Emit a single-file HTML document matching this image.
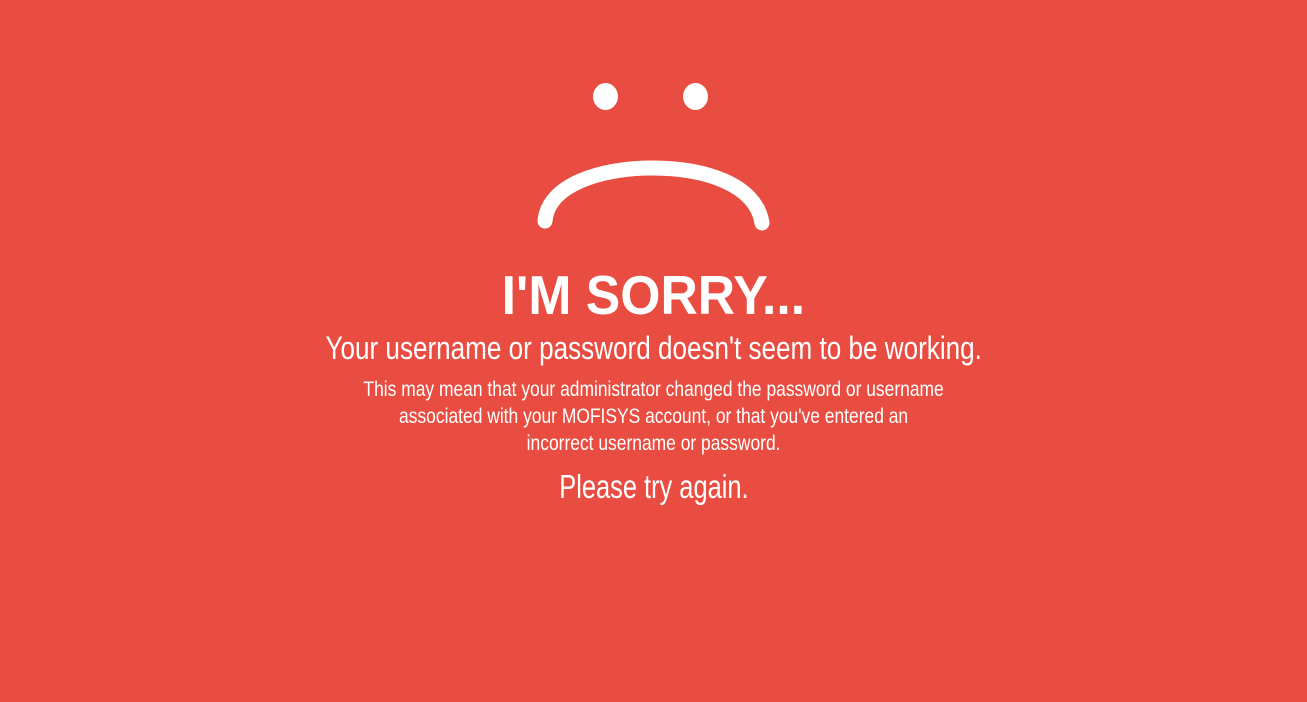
<!DOCTYPE html>
<html><head><style>
html,body{margin:0;padding:0}
body{width:1307px;height:702px;background:#E94C40;position:relative;overflow:hidden;color:#fff;font-family:"Liberation Sans",sans-serif}
.l{position:absolute;left:0;width:1307px;text-align:center;line-height:1;white-space:nowrap}
.l span{display:inline-block}
</style></head><body>
<svg width="1307" height="260" style="position:absolute;left:0;top:0">
<ellipse cx="605.5" cy="96.5" rx="12.5" ry="13.5" fill="#fff"/>
<ellipse cx="695.5" cy="96.5" rx="12.5" ry="13.5" fill="#fff"/>
<path d="M545 221 C548 185 600 168 652 168 C704 168 756 184 762 223" fill="none" stroke="#fff" stroke-width="15" stroke-linecap="round"/>
</svg>
<div class="l" style="top:268px;font-size:55px;font-weight:bold"><span style="transform:scaleX(0.94)">I'M SORRY...</span></div>
<div class="l" style="top:332px;font-size:32px"><span style="transform:scaleX(0.815)">Your username or password doesn't seem to be working.</span></div>
<div class="l" style="top:376px;font-size:21px;line-height:27px"><span style="transform:scaleX(0.83)">This may mean that your administrator changed the password or username<br>associated with your MOFISYS account, or that you've entered an<br>incorrect username or password.</span></div>
<div class="l" style="top:470px;font-size:33px"><span style="transform:scaleX(0.77)">Please try again.</span></div>
</body></html>
